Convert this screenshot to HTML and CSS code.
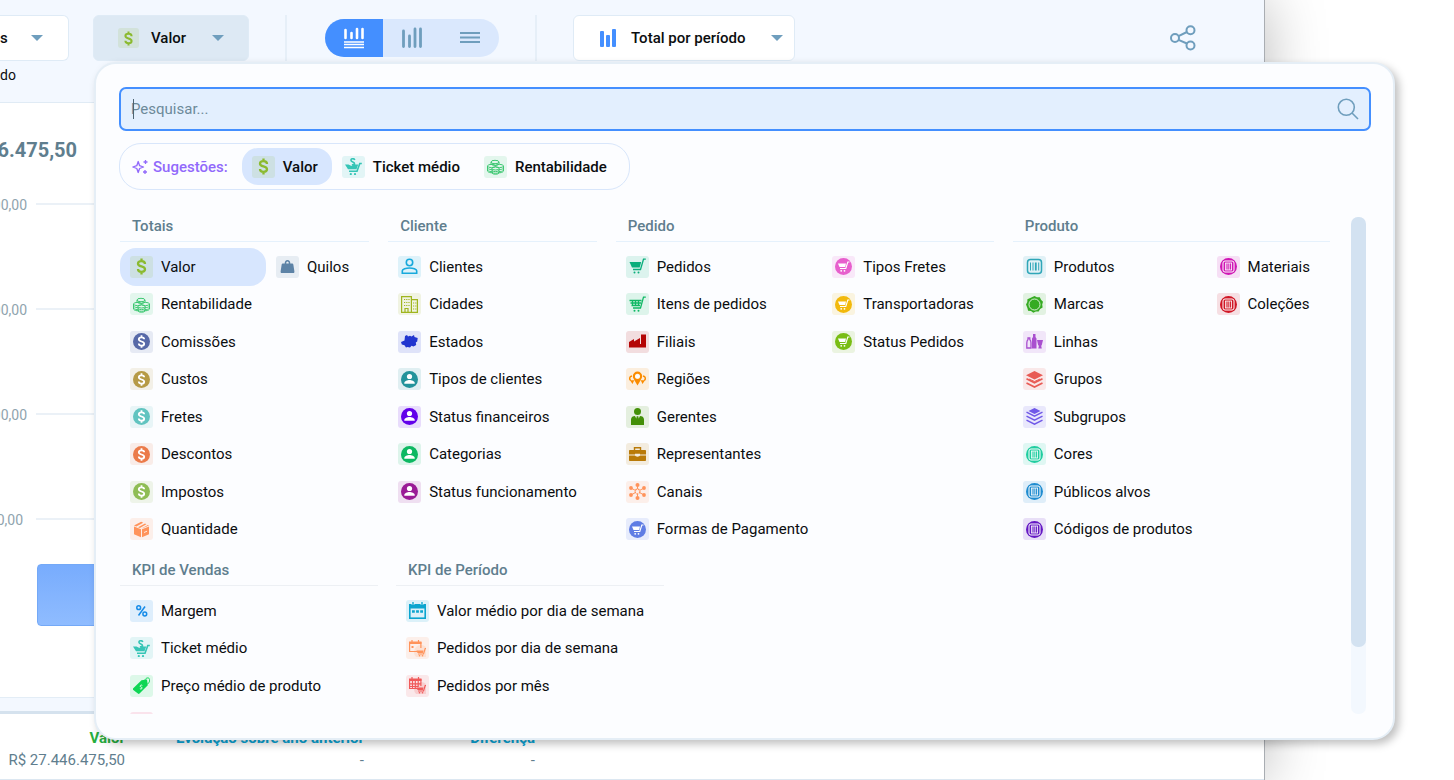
FILE: index.html
```html
<!DOCTYPE html>
<html lang="pt-BR">
<head>
<meta charset="utf-8">
<meta name="viewport" content="width=device-width, initial-scale=1">
<title>Total por período</title>
<link rel="stylesheet" href="styles.css">
</head>
<body>
<svg class="sprite" aria-hidden="true">
  <symbol id="dollar" viewBox="0 0 17 17"><path d="M12 6C12 4 10.600 3.200 8.500 3.200S5 4.100 5 5.700C5 9.300 12 7.600 12 11.300c0 1.600-1.400 2.500-3.500 2.500S5 12.900 5 11M8.500 .5v2.500M8.500 14v2.500" fill="none" stroke="currentColor" stroke-width="2.300"/></symbol>
  <symbol id="coin" viewBox="0 0 17 17"><circle cx="8.500" cy="8.500" r="8.500" fill="currentColor"/><path d="M11.200 6.300C11.200 4.900 10 4.300 8.500 4.300S5.800 5 5.800 6.300C5.800 9 11.200 8 11.200 10.700c0 1.300-1.200 2-2.700 2S5.800 12 5.800 10.600M8.500 2.200v2M8.500 12.800v2" fill="none" stroke="#fff" stroke-width="1.800"/></symbol>
  <symbol id="weight" viewBox="0 0 17 17"><path d="M4 5.500h9c1 0 1.200.5 1.400 1.500l1 6.500c.1.900-.2 1.500-1 1.500H2.600c-.8 0-1.100-.6-1-1.500l1-6.500C2.800 6 3 5.500 4 5.500z" fill="currentColor"/><path d="M6.500 6c-.5-4.500 4.500-4.500 4 0" fill="none" stroke="currentColor" stroke-width="1.500"/></symbol>
  <symbol id="coins" viewBox="0 0 17 17"><g fill="none" stroke="currentColor" stroke-width="1"><ellipse cx="8" cy="4" rx="4" ry="1.700"/><path d="M4 4v2.500M12 4v2.500M4 6.200c1 1.500 7 1.500 8 0"/><ellipse cx="4.500" cy="8" rx="4" ry="1.600"/><path d="M.5 8v5M.5 10c1 1.500 3.500 1.700 5 1.400M.5 12c1 1.500 3.500 1.700 5 1.400M.5 13.300c1 1.200 3 1.500 5 1.500"/><ellipse cx="12.500" cy="8" rx="4" ry="1.600"/><path d="M16.500 8v5M16.500 10c-1 1.500-3 1.700-4.500 1.400M16.500 12c-1 1.500-3 1.700-4.500 1.400M16.500 13.300c-1 1.200-3 1.500-5 1.500"/><ellipse cx="8.500" cy="10.500" rx="3.500" ry="1.500"/><path d="M5 10.500V15c1 1.700 6 1.700 7 0v-4.500M5 12.500c1 1.500 6 1.500 7 0M5 14.200c1 1.500 6 1.500 7 0"/></g></symbol>
  <symbol id="box" viewBox="0 0 17 17"><path d="M1 5.500l7 2.800v8L1 13.200zM9 8.300l7-2.800v7.700l-7 3.100zM1 4.500L8.200.8l2 .9-6.900 3.700zM5 6.200l7-3.600 1.400.6-6.500 3.700zM8.500 7.500l6.400-3.400 1.100.5-7.200 3z" fill="currentColor"/><path d="M11 11.500l3-1.300" stroke="#fff" stroke-width=".8"/></symbol>
  <symbol id="person" viewBox="0 0 17 17"><g fill="none" stroke="currentColor" stroke-width="1.600"><circle cx="8.500" cy="4.500" r="3.200"/><path d="M1.300 15.200v-2.400c0-1.500 3.700-2.800 7.200-2.800s7.200 1.300 7.200 2.800v2.400z"/></g></symbol>
  <symbol id="city" viewBox="0 0 17 17"><path d="M.6.600h9.800v15.800H.6zM10.400 3.700h6v12.700h-6M4 16v-3.500h3V16" fill="none" stroke="currentColor" stroke-width="1.200"/><path d="M3 3.500h6M3 6.500h6M3 9.500h6M12 7h3.500M12 10h3.500M12 13h3.500" stroke="currentColor" stroke-width="1" stroke-dasharray="1.200 1"/></symbol>
  <symbol id="state" viewBox="0 0 17 17"><path d="M4 3l2-1 1 1.500 2-.8 1.500.8L13 2l.5 2 3.200 1-.5 3.500-1.400 1 .4 2.500-2.700 1.500-2-.8-1.500 1.800-2.500-.5L5 14.500l-1.500-2.200L.8 11.500 0 9l3.500-1.500z" fill="currentColor"/></symbol>
  <symbol id="user" viewBox="0 0 17 17"><circle cx="8.500" cy="8.500" r="8.500" fill="currentColor"/><circle cx="8.500" cy="5.500" r="2.600" fill="#fff"/><path d="M3.300 12c0-2 3.200-3 5.200-3s5.200 1 5.200 3v.8H3.300z" fill="#fff"/></symbol>
  <symbol id="cart" viewBox="0 0 17 17"><path d="M.5 4h11.700l-1.500 5.500H3z" fill="currentColor"/><path d="M16.800 1.200h-2.300l-3 10.300H4" fill="none" stroke="currentColor" stroke-width="1.300"/><circle cx="5.500" cy="14.500" r="1" fill="currentColor"/><circle cx="9.500" cy="14.500" r="1" fill="currentColor"/></symbol>
  <symbol id="cartgrid" viewBox="0 0 17 17"><path d="M.5 4.500h12M1.500 7h10.500M2.500 9.500h8.500M3.500 4v5.500M6.500 4v5.500M9.500 4v5.500M16.800 1.200h-2.300l-3 10.800H4" fill="none" stroke="currentColor" stroke-width="1.300"/><circle cx="5.500" cy="14.800" r="1" fill="currentColor"/><circle cx="9.500" cy="14.800" r="1" fill="currentColor"/></symbol>
  <symbol id="factory" viewBox="0 0 17 17"><path d="M0 9l5-3v2.500L11 5v6h1V1.500h5V14.500H0z" fill="currentColor"/></symbol>
  <symbol id="pins" viewBox="0 0 17 17"><circle cx="8.500" cy="5.300" r="3.600" fill="none" stroke="currentColor" stroke-width="2.200"/><path d="M4.800 8.300h7.400L8.500 14.500z" fill="currentColor"/><circle cx="8.500" cy="5.500" r="2.300" fill="#fff" fill-opacity=".85"/><path d="M3 5C0 5.300.3 8.500 1.800 9.500M14 5c3 .3 2.700 3.500 1.200 4.500" fill="none" stroke="currentColor" stroke-width="1.500"/><path d="M1 9.300h4.300L3.500 13zM16 9.300h-4.300L13.500 13z" fill="currentColor"/></symbol>
  <symbol id="manager" viewBox="0 0 17 17"><circle cx="8.500" cy="3.500" r="3.500" fill="currentColor"/><path d="M2 17v-5.500C2 9 4 8 6 8l2.500 5L11 8c2 0 4 1 4 3.500V17zM7.700 8.300h1.600l.5 3-1.300 2-1.300-2z" fill="currentColor"/></symbol>
  <symbol id="briefcase" viewBox="0 0 17 17"><path d="M1 4h15c.6 0 1 .4 1 1v3.500H11v-.7H6v.7H0V5c0-.6.4-1 1-1zM0 9.500h6c.5 1.500 4.500 1.500 5 0h6V14c0 .6-.4 1-1 1H1c-.6 0-1-.4-1-1z" fill="currentColor"/><path d="M5.500 4V1.700h6V4" fill="none" stroke="currentColor" stroke-width="1.400"/></symbol>
  <symbol id="hub" viewBox="0 0 17 17"><g fill="currentColor"><circle cx="8.500" cy="2" r="2"/><circle cx="8.500" cy="15" r="2"/><circle cx="2" cy="5" r="1.900"/><circle cx="15" cy="5" r="1.900"/><circle cx="2" cy="12" r="1.900"/><circle cx="15" cy="12" r="1.900"/></g><path d="M8.500 2v4M8.500 11v4M2 5l4.500 2.500M15 5l-4.500 2.500M2 12l4.500-2.500M15 12l-4.500-2.500" stroke="currentColor" stroke-width="1"/><circle cx="8.500" cy="8.500" r="2.400" fill="none" stroke="currentColor" stroke-width="1.200" stroke-dasharray="1.800 .8"/></symbol>
  <symbol id="cartcircle" viewBox="0 0 17 17"><circle cx="8.500" cy="8.500" r="8.500" fill="currentColor"/><path d="M3 5.500h8L10.200 9H4.500z" fill="#fff"/><path d="M14.500 4h-1.700l-2 6.500H5" fill="none" stroke="#fff" stroke-width="1.100"/><circle cx="6.200" cy="12.800" r=".9" fill="#fff"/><circle cx="9.500" cy="12.800" r=".9" fill="#fff"/></symbol>
  <symbol id="barcode" viewBox="0 0 17 17"><rect x="1.500" y="1.500" width="14" height="14" rx="3" fill="none" stroke="currentColor" stroke-width="1.500"/><path d="M4.500 4.500v8M7 4.500v8M12.700 4.500v8" stroke="currentColor" stroke-width="1"/><path d="M9.800 4.500v8" stroke="currentColor" stroke-width="1.800"/></symbol>
  <symbol id="badge" viewBox="0 0 17 17"><path d="M8.500 0l2.400 1.300 2.900-.1 1.200 2.600 2 2-.8 2.700.4 2.900-2.500 1.500-1.400 2.600-2.800-.1-2.600 1.400-2.300-1.700-2.900-.4-.7-2.800L0 8.500l1.300-2.400.1-2.900L4.200 2z" fill="currentColor"/><circle cx="8.500" cy="8.500" r="5.500" fill="none" stroke="#fff" stroke-width=".8"/></symbol>
  <symbol id="bottles" viewBox="0 0 17 17"><path d="M2 5h1.800v1.500c1 1 1.200 2 1.200 3.500v5H.8v-5c0-1.500.2-2.500 1.200-3.500z" fill="none" stroke="currentColor" stroke-width="1.300"/><path d="M7 1h2.500v3l1 1.500V15.500H6V5.500L7 4zM11 7h6l-1.300 5.500h-.6L15.800 15.500h-3.500l.7-3h-.8z" fill="currentColor"/></symbol>
  <symbol id="layers" viewBox="0 0 17 17"><path d="M8.500 0L17 4.200 8.500 8.400 0 4.200z" fill="currentColor"/><path d="M.5 7.800l8 4 8-4M.5 12l8 4 8-4" fill="none" stroke="currentColor" stroke-width="1.700"/><path d="M3 8l5.500 2.500L14 8" fill="none" stroke="currentColor" stroke-width="1"/></symbol>
  <symbol id="layersopen" viewBox="0 0 17 17"><path d="M8.500 0L14.500 3 8.500 6 2.500 3z" fill="currentColor"/><path d="M.5 4.200l8 4 8-4M.5 8.200l8 4 8-4M.5 12.200l8 4 8-4" fill="none" stroke="currentColor" stroke-width="1.500"/></symbol>
  <symbol id="barcircle" viewBox="0 0 17 17"><circle cx="8.500" cy="8.500" r="8.500" fill="currentColor"/><rect x="3" y="3" width="11" height="11" rx="2" fill="none" stroke="#fff" stroke-width="1"/><path d="M5.500 5v7M7 5v7M11.500 5v7M5 5h7M5 12h7" stroke="#fff" stroke-width=".8"/><path d="M9.300 5v7" stroke="#fff" stroke-opacity=".6" stroke-width="1.600"/></symbol>
  <symbol id="percent" viewBox="0 0 17 17"><g fill="none" stroke="currentColor" stroke-width="1.500"><circle cx="5.700" cy="5.700" r="1.900"/><circle cx="11.800" cy="12" r="1.900"/><path d="M12 4.500l-6.500 9"/></g></symbol>
  <symbol id="ticket" viewBox="0 0 17 17"><path d="M0 6.500h3.500L6.500 8l3-2.500 1 1h2.700L11.500 11.300H3z" fill="currentColor"/><path d="M16.800 5.500h-2L12 13.300H4M9.800 2C9 0 5.800.4 6 2.300c.2 2 3.500 1.200 3.500 3.200 0 1-1.400 1.500-2.700 1.200" fill="none" stroke="currentColor" stroke-width="1.600"/><circle cx="5.800" cy="16" r="1.100" fill="currentColor"/><circle cx="10" cy="16" r="1.100" fill="currentColor"/></symbol>
  <symbol id="tag" viewBox="0 0 17 17"><path d="M0 11.500L8.500 3.300l5.500-.8.800 5.700L6.500 16.600c-.5.500-1.100.5-1.600 0L0 12.700z" fill="currentColor"/><path d="M11.500 4.500C12 1 15 .2 16.200 1.500s.3 4-1.600 5.500" fill="none" stroke="currentColor" stroke-width="1"/><path d="M9.300 8.500c-1-1-2.500 0-2 1s1.500.5 1.800 1.300-1.200 1.600-2.200.8" fill="none" stroke="#fff" stroke-width=".9"/></symbol>
  <symbol id="calendar" viewBox="0 0 17 17"><path d="M0 2h17v4.500H0z" fill="currentColor"/><rect x=".8" y="2.800" width="15.400" height="13.400" fill="none" stroke="currentColor" stroke-width="1.600"/><path d="M4 0v3M13 0v3" stroke="#fff" stroke-width="2.600"/><path d="M4 0v3.500M13 0v3.500" stroke="currentColor" stroke-width="1.400"/><path d="M3 9.500h2.800M7.100 9.500h2.800M11.200 9.500H14" stroke="currentColor" stroke-width="2.600"/></symbol>
  <symbol id="daycart" viewBox="0 0 17 17"><circle cx="12" cy="12" r="7" fill="currentColor" opacity=".15"/><path d="M0 1.500h12.500v2.500H0zM3 0v2M9.500 0v2M2.500 6h2v2h-2z" fill="currentColor"/><path d="M8 11.500H.6V2M11.900 2v6M3 0v2M9.500 0v2M17.500 8.500h-1.300l-1.700 5.500H9" fill="none" stroke="currentColor" stroke-width="1.200"/><path d="M7.500 10.500h7L13.800 13H8.500z" fill="currentColor"/><circle cx="10.500" cy="15.800" r=".8" fill="currentColor"/><circle cx="13.500" cy="15.800" r=".8" fill="currentColor"/></symbol>
  <symbol id="monthcart" viewBox="0 0 17 17"><circle cx="12" cy="12" r="7" fill="currentColor" opacity=".18"/><path d="M0 1.500h12.500v2.500H0z" fill="currentColor"/><path d="M8 11.500H.6V2M11.900 2v7M3 0v2M9.500 0v2M3.500 4v7M6.300 4v7M9.200 4v6M.5 6.800h11.500M.5 9.500h9M17.500 8.500h-1.300l-1.700 5.500H9" fill="none" stroke="currentColor" stroke-width="1.200"/><path d="M7.500 10.500h7L13.800 13H8.500z" fill="currentColor"/><circle cx="10.500" cy="15.800" r=".8" fill="currentColor"/><circle cx="13.500" cy="15.800" r=".8" fill="currentColor"/></symbol>
</svg>

<div class="page">
  <main class="app">
    <header class="top">
      <div class="toolbar">
        <button class="picker picker-cut" type="button"><span>s</span><i class="caret"></i></button>
        <button class="picker picker-open" type="button" aria-expanded="true"><span class="tile tile-small valor"><svg><use href="#dollar"/></svg></span><span>Valor</span><i class="caret"></i></button>
        <span class="divider divider-first"></span>
        <div class="segments">
          <button class="segment segment-on" type="button" aria-label="Gráfico e tabela"><svg width="22" height="22" viewBox="0 0 22 22" fill="none" stroke="currentColor"><path d="M2.500 3v8M8.500 6v5M14 2v9M19.500 2v9" stroke-width="2.600" stroke-linecap="round"/><path d="M1 15h20M1 17.500h20M1 20.500h20" stroke-width="1.300"/></svg></button>
          <button class="segment" type="button" aria-label="Gráfico"><svg width="22" height="22" viewBox="0 0 22 22" stroke="currentColor" stroke-width="2.800" stroke-linecap="round"><path d="M2.500 4v15.500M8.500 9v10.500M14 2v17.500M19.500 2v17.500"/></svg></button>
          <button class="segment" type="button" aria-label="Tabela"><svg width="22" height="22" viewBox="0 0 22 22" stroke="currentColor" stroke-width="2"><path d="M1 6h20M1 10.500h20M1 15h20"/></svg></button>
        </div>
        <span class="divider"></span>
        <button class="picker picker-chart" type="button"><svg class="bars" width="18" height="18" viewBox="0 0 18 18" fill="currentColor"><rect x="1" y="2" width="4" height="16" rx="1"/><rect x="7" y="6" width="4" height="12" rx="1"/><rect x="13" width="4" height="18" rx="1"/></svg><span>Total por período</span><i class="caret"></i></button>
        <button class="share" type="button" aria-label="Compartilhar"><svg width="26" height="26" viewBox="0 0 26 26" fill="none" stroke="currentColor" stroke-width="2"><circle cx="5" cy="13" r="4"/><circle cx="20.500" cy="5.200" r="4"/><circle cx="20.500" cy="20.500" r="4"/><path d="M8.500 11.200l8.400-4.200M8.500 14.800l8.400 3.700"/></svg></button>
      </div>
      <p class="caption">do</p>
    </header>
    <section class="chart">
      <h1 class="total">46.475,50</h1>
      <div class="axis">
        <div class="tick"><span>00,00</span></div>
        <div class="tick"><span>00,00</span></div>
        <div class="tick"><span>00,00</span></div>
        <div class="tick tick-last"><span>0,00</span></div>
      </div>
      <div class="bar"></div>
    </section>
    <table class="summary">
      <thead><tr><th class="up">Valor</th><th>Evolução sobre ano anterior</th><th>Diferença</th><th></th></tr></thead>
      <tbody><tr><td>R$ 27.446.475,50</td><td>-</td><td>-</td><td></td></tr></tbody>
    </table>
  </main>

  <div class="panel" role="dialog" aria-label="Valor">
    <div class="search">
      <input type="text" placeholder="Pesquisar..." aria-label="Pesquisar">
      <svg width="22" height="22" viewBox="0 0 22 22" fill="none" stroke="currentColor" stroke-width="1.600"><circle cx="9.300" cy="9.300" r="8"/><path d="M15 15l6 6"/></svg>
    </div>

    <div class="suggest">
      <span class="suggest-label"><svg width="16" height="16" viewBox="0 0 16 16" fill="none" stroke="currentColor" stroke-width="1.300" stroke-linejoin="round"><path d="M6.200 2.500L7.600 6.700 11.500 8 7.600 9.500 6.200 13.500 4.800 9.500.8 8l4-1.300zM13.500 1v4M11.500 3h4M13 11v4M11 13h4"/></svg>Sugestões:</span>
      <button class="item item-on" type="button"><span class="tile valor"><svg><use href="#dollar"/></svg></span>Valor</button>
      <button class="item" type="button"><span class="tile teal"><svg><use href="#ticket"/></svg></span>Ticket médio</button>
      <button class="item" type="button"><span class="tile mint"><svg><use href="#coins"/></svg></span>Rentabilidade</button>
    </div>

    <div class="body">
      <div class="groups">
        <div class="row">
          <section class="group">
            <h2>Totais</h2>
            <div class="list">
              <button class="item item-on" type="button"><span class="tile valor"><svg><use href="#dollar"/></svg></span>Valor</button>
              <button class="item" type="button"><span class="tile mint"><svg><use href="#coins"/></svg></span>Rentabilidade</button>
              <button class="item" type="button"><span class="tile comissoes"><svg><use href="#coin"/></svg></span>Comissões</button>
              <button class="item" type="button"><span class="tile custos"><svg><use href="#coin"/></svg></span>Custos</button>
              <button class="item" type="button"><span class="tile fretes"><svg><use href="#coin"/></svg></span>Fretes</button>
              <button class="item" type="button"><span class="tile descontos"><svg><use href="#coin"/></svg></span>Descontos</button>
              <button class="item" type="button"><span class="tile impostos"><svg><use href="#coin"/></svg></span>Impostos</button>
              <button class="item" type="button"><span class="tile orange"><svg><use href="#box"/></svg></span>Quantidade</button>
              <button class="item" type="button"><span class="tile quilos"><svg><use href="#weight"/></svg></span>Quilos</button>
            </div>
          </section>
          <section class="group">
            <h2>Cliente</h2>
            <div class="list">
              <button class="item" type="button"><span class="tile clientes"><svg><use href="#person"/></svg></span>Clientes</button>
              <button class="item" type="button"><span class="tile cidades"><svg><use href="#city"/></svg></span>Cidades</button>
              <button class="item" type="button"><span class="tile estados"><svg><use href="#state"/></svg></span>Estados</button>
              <button class="item" type="button"><span class="tile tipos"><svg><use href="#user"/></svg></span>Tipos de clientes</button>
              <button class="item" type="button"><span class="tile financeiros"><svg><use href="#user"/></svg></span>Status financeiros</button>
              <button class="item" type="button"><span class="tile categorias"><svg><use href="#user"/></svg></span>Categorias</button>
              <button class="item" type="button"><span class="tile funcionamento"><svg><use href="#user"/></svg></span>Status funcionamento</button>
            </div>
          </section>
          <section class="group">
            <h2>Pedido</h2>
            <div class="list">
              <button class="item" type="button"><span class="tile pedidos"><svg><use href="#cart"/></svg></span>Pedidos</button>
              <button class="item" type="button"><span class="tile itens"><svg><use href="#cartgrid"/></svg></span>Itens de pedidos</button>
              <button class="item" type="button"><span class="tile filiais"><svg><use href="#factory"/></svg></span>Filiais</button>
              <button class="item" type="button"><span class="tile regioes"><svg><use href="#pins"/></svg></span>Regiões</button>
              <button class="item" type="button"><span class="tile gerentes"><svg><use href="#manager"/></svg></span>Gerentes</button>
              <button class="item" type="button"><span class="tile representantes"><svg><use href="#briefcase"/></svg></span>Representantes</button>
              <button class="item" type="button"><span class="tile orange"><svg><use href="#hub"/></svg></span>Canais</button>
              <button class="item" type="button"><span class="tile formas"><svg><use href="#cartcircle"/></svg></span>Formas de Pagamento</button>
              <button class="item" type="button"><span class="tile tiposfretes"><svg><use href="#cartcircle"/></svg></span>Tipos Fretes</button>
              <button class="item" type="button"><span class="tile transportadoras"><svg><use href="#cartcircle"/></svg></span>Transportadoras</button>
              <button class="item" type="button"><span class="tile statuspedidos"><svg><use href="#cartcircle"/></svg></span>Status Pedidos</button>
            </div>
          </section>
          <section class="group">
            <h2>Produto</h2>
            <div class="list">
              <button class="item" type="button"><span class="tile produtos"><svg><use href="#barcode"/></svg></span>Produtos</button>
              <button class="item" type="button"><span class="tile marcas"><svg><use href="#badge"/></svg></span>Marcas</button>
              <button class="item" type="button"><span class="tile linhas"><svg><use href="#bottles"/></svg></span>Linhas</button>
              <button class="item" type="button"><span class="tile grupos"><svg><use href="#layers"/></svg></span>Grupos</button>
              <button class="item" type="button"><span class="tile subgrupos"><svg><use href="#layersopen"/></svg></span>Subgrupos</button>
              <button class="item" type="button"><span class="tile cores"><svg><use href="#barcircle"/></svg></span>Cores</button>
              <button class="item" type="button"><span class="tile publicos"><svg><use href="#barcircle"/></svg></span>Públicos alvos</button>
              <button class="item" type="button"><span class="tile codigos"><svg><use href="#barcircle"/></svg></span>Códigos de produtos</button>
              <button class="item" type="button"><span class="tile materiais"><svg><use href="#barcircle"/></svg></span>Materiais</button>
              <button class="item" type="button"><span class="tile colecoes"><svg><use href="#barcircle"/></svg></span>Coleções</button>
            </div>
          </section>
        </div>
        <div class="row row-kpi">
          <section class="group group-sales">
            <h2>KPI de Vendas</h2>
            <div class="list">
              <button class="item" type="button"><span class="tile margem"><svg><use href="#percent"/></svg></span>Margem</button>
              <button class="item" type="button"><span class="tile teal"><svg><use href="#ticket"/></svg></span>Ticket médio</button>
              <button class="item" type="button"><span class="tile preco"><svg><use href="#tag"/></svg></span>Preço médio de produto</button>
              <span class="item"><span class="tile pink"></span></span>
            </div>
          </section>
          <section class="group">
            <h2>KPI de Período</h2>
            <div class="list">
              <button class="item" type="button"><span class="tile semana"><svg><use href="#calendar"/></svg></span>Valor médio por dia de semana</button>
              <button class="item" type="button"><span class="tile orange"><svg><use href="#daycart"/></svg></span>Pedidos por dia de semana</button>
              <button class="item" type="button"><span class="tile mes"><svg><use href="#monthcart"/></svg></span>Pedidos por mês</button>
            </div>
          </section>
        </div>
      </div>
      <div class="scrollbar"><div class="thumb"></div></div>
    </div>
  </div>
</div>
</body>
</html>
```
FILE: styles.css
```css
* { box-sizing: border-box; }
body {
  margin: 0;
  background: #fff;
  color: #0b0d0f;
  font: 15px/18px Roboto, "Liberation Sans", sans-serif;
}
button {
  font: inherit;
  color: inherit;
  background: none;
  border: 0;
  padding: 0;
  cursor: pointer;
}
h1, h2, p { margin: 0; }
svg { display: block; flex: none; }
.sprite { display: none; }
.page {
  position: relative;
  height: 100vh;
  overflow: hidden;
}

/* Report behind the menu */
.app {
  display: flex;
  flex-direction: column;
  height: 100%;
  margin-right: 189px;
  border-right: 1px solid #a9adb2;
  background: #fff;
  box-shadow: 0 0 56px rgba(0, 0, 0, 0.28);
}
.top {
  height: 103px;
  padding-top: 15px;
  background: #f3f8ff;
  border-bottom: 1px solid #e0ebf5;
}
.toolbar {
  display: flex;
  align-items: center;
  height: 46px;
  padding-right: 68px;
}
.picker {
  display: flex;
  align-items: center;
  height: 46px;
  background: #fff;
  border: 1px solid #dfebf6;
  border-radius: 6px;
  font-weight: 500;
}
.caret {
  margin-left: auto;
  border: solid transparent;
  border-width: 6px 6px 0;
  border-top-color: #6f9ebd;
}
.picker-cut {
  width: 69px;
  padding-right: 25px;
  border-left: 0;
  border-radius: 0 6px 6px 0;
}
.picker-open {
  width: 156px;
  margin-left: 24px;
  padding: 0 24px;
  gap: 12px;
  background: #dde9f4;
}
.picker-chart {
  width: 222px;
  padding: 0 11px 0 25px;
  gap: 14px;
}
.bars { color: #448fff; }
.divider {
  width: 2px;
  align-self: stretch;
  margin: 0 36px;
  background: #e6eff8;
}
.divider-first { margin-right: 38px; }
.segments {
  display: flex;
  height: 38px;
  border-radius: 19px;
  overflow: hidden;
  background: #dae8fd;
}
.segment {
  display: flex;
  align-items: center;
  justify-content: center;
  width: 58px;
  color: #6f9ebd;
}
.segment-on { background: #448fff; color: #fff; }
.share { margin-left: auto; color: #6f9ebd; }
.caption { padding-top: 5px; font-size: 14px; }
.chart { flex: 1; overflow: hidden; }
.total {
  display: flex;
  justify-content: flex-end;
  width: 77px;
  padding-top: 35px;
  font-size: 20px;
  line-height: 24px;
  font-weight: 700;
  color: #5f7e8e;
}
.axis { padding-top: 33px; }
.tick {
  display: flex;
  align-items: center;
  gap: 9px;
  height: 18px;
  margin-bottom: 87px;
  color: #90a4ae;
  font-size: 14px;
}
.tick span {
  display: flex;
  justify-content: flex-end;
  width: 27px;
  padding-top: 2px;
  flex: none;
}
.tick::after {
  content: "";
  flex: 1;
  height: 2px;
  background: #ebf1f7;
}
.tick-last { margin-bottom: 36px; }
.tick-last span { width: 23px; margin-right: 4px; }
.bar {
  width: 96px;
  height: 62px;
  margin-left: 37px;
  border: 1px solid #74a9f7;
  border-radius: 4px;
  background: linear-gradient(#78acfd, #8fbcff);
}
.summary {
  width: 100%;
  border-collapse: collapse;
  table-layout: fixed;
  border-top: 13px solid #f3f8ff;
  border-bottom: 1px solid #dce7f1;
  box-shadow: 0 -1px #e3edf6;
  color: #5f7e8e;
  text-align: right;
}
.summary tr:first-child th { box-shadow: inset 0 3px #d5e2ee; }
.summary th { padding: 18px 0 2px; color: #0aa6d8; font-weight: 700; text-align: right; }
.summary td { padding: 2px 0 10px; }
.summary .up { width: 125px; color: #27ae3e; }
.summary th:nth-child(2) { width: 239px; }
.summary th:nth-child(3) { width: 171px; }

/* Menu */
.panel {
  position: absolute;
  top: 62px;
  left: 94px;
  right: 59px;
  padding: 23px 22px 24px 23px;
  border: 2px solid #e5eef6;
  border-radius: 22px;
  background: #fcfdff;
  box-shadow: 4px 4px 8px rgba(0, 0, 0, 0.25);
}
.search {
  position: relative;
  display: flex;
  align-items: center;
  height: 44px;
  padding: 0 10px;
  border: 2px solid #448fff;
  border-radius: 7px;
  background: #e3effe;
  color: #6f9ebd;
}
.search input {
  flex: 1;
  padding: 0;
  border: 0;
  outline: 0;
  background: none;
  font: inherit;
}
.search input::placeholder { color: #6d8a9a; opacity: 1; }
.search::before {
  content: "";
  position: absolute;
  left: 12px;
  width: 1px;
  height: 20px;
  background: #4d6472;
}
.suggest {
  display: flex;
  align-items: center;
  width: max-content;
  height: 47px;
  margin-top: 12px;
  padding: 0 8px 0 12px;
  border: 1px solid #d8e6fb;
  border-radius: 22px;
  font-weight: 500;
}
.suggest .item { height: 37px; }
.suggest-label {
  display: flex;
  align-items: center;
  gap: 5px;
  margin-right: 14px;
  color: #9169fb;
}
.item {
  display: flex;
  align-items: center;
  gap: 8px;
  padding: 0 14px 0 10px;
  border-radius: 16px;
  white-space: nowrap;
}
.item-on { background: #d7e6fe; }
.body {
  display: flex;
  justify-content: space-between;
  height: 497px;
  margin-top: 27px;
  padding: 0 5px 0 1px;
}
.groups { overflow: hidden; }
.scrollbar {
  width: 15px;
  border-radius: 7px;
  background: #f3f8fe;
}
.thumb {
  height: 430px;
  border-radius: 7px;
  background: #d3e2f1;
}
.row { display: flex; gap: 19px; }
.group h2 {
  padding: 0 12px 6px;
  border-bottom: 1px solid #e5f1fc;
  font-size: 15px;
  line-height: 18px;
  font-weight: 500;
  color: #5f7e8e;
}
.list {
  display: grid;
  grid-template-rows: repeat(8, 1fr);
  grid-auto-flow: column;
  justify-content: start;
  height: 300px;
  margin-top: 6px;
  padding-right: 6px;
}
.row-kpi { gap: 18px; margin-top: 13px; }
.row-kpi h2 { border-color: #edf0f4; }
.row-kpi .list {
  grid-template-rows: repeat(4, 1fr);
  height: 150px;
}
.group-sales { min-width: 258px; }

/* Icon tiles: the tint follows the icon colour */
.tile {
  display: flex;
  align-items: center;
  justify-content: center;
  flex: none;
  width: 23px;
  height: 22px;
  border-radius: 3px;
  background: color-mix(in srgb, currentColor 13%, transparent);
}
.tile svg { width: 17px; height: 17px; overflow: visible; }
.tile-small { width: 21px; height: 20px; }
.tile-small svg { width: 15px; height: 15px; }
.valor { color: #8bba2f; }
.teal { color: #35c5b6; }
.mint { color: #3fc873; }
.comissoes { color: #5769a8; }
.custos { color: #b69a45; }
.fretes { color: #61c4c0; }
.descontos { color: #eb7b4a; }
.impostos { color: #8fbd55; }
.orange { color: #ff935a; }
.quilos { color: #5d83a6; }
.clientes { color: #17a9dc; }
.cidades { color: #9fb51e; }
.estados { color: #2135cf; }
.tipos { color: #23939b; }
.financeiros { color: #6200ea; }
.categorias { color: #0db862; }
.funcionamento { color: #9a1b96; }
.pedidos { color: #0aae7c; }
.itens { color: #10b865; }
.filiais { color: #b40505; }
.regioes { color: #fb8c00; }
.gerentes { color: #438f08; }
.representantes { color: #b97a08; }
.formas { color: #5f7de4; }
.tiposfretes { color: #e75fcd; }
.transportadoras { color: #f2b90c; }
.statuspedidos { color: #79bd14; }
.produtos { color: #2fa6b8; }
.marcas { color: #35ab22; }
.linhas { color: #a94fcf; }
.grupos { color: #e85b55; }
.subgrupos { color: #7059e8; }
.cores { color: #20cda0; }
.publicos { color: #1f8cd0; }
.codigos { color: #6418c4; }
.materiais { color: #cf16b4; }
.colecoes { color: #d01524; }
.margem { color: #168be8; }
.preco { color: #0dd654; }
.pink { color: #f0396b; }
.semana { color: #0ba5cf; }
.mes { color: #f05a5a; }
```
